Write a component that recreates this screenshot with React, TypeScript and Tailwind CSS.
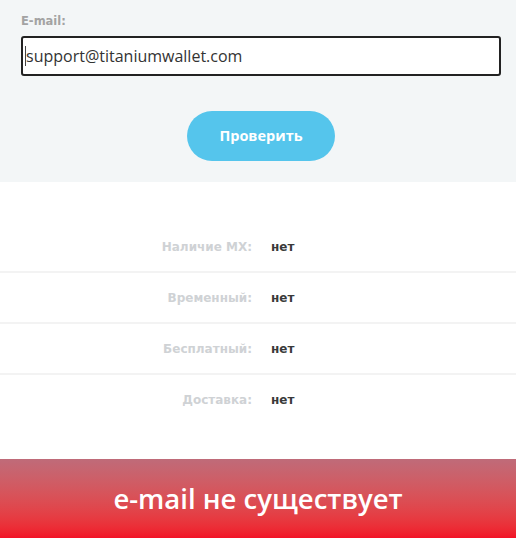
const rows = [
  { label: "Наличие MX:", value: "нет" },
  { label: "Временный:", value: "нет" },
  { label: "Бесплатный:", value: "нет" },
  { label: "Доставка:", value: "нет" },
];

export default function App() {
  return (
    <div className="flex h-[538px] w-full flex-col overflow-hidden bg-white font-['Open_Sans',sans-serif]">
      <section className="flex h-[182px] shrink-0 flex-col bg-[#f3f6f7] pl-[21px] pr-[15px] pt-[13px]">
        <label className="font-['DejaVu_Sans',sans-serif] text-[11.5px] font-bold leading-[16px] text-[#a3a3a3]">
          E-mail:
        </label>
        <div className="mt-[7px] flex h-[40px] items-center rounded-[3px] border-2 border-[#222] bg-white pl-[2px]">
          <span className="h-[20px] w-px bg-[#444]" />
          <span className="text-[16px] text-[#333]">support@titaniumwallet.com</span>
        </div>
        <div className="mt-[35px] flex justify-center">
          <button
            type="button"
            className="h-[50px] w-[148px] rounded-full bg-[#55c5ec] text-[14.5px] font-bold text-white"
          >
            Проверить
          </button>
        </div>
      </section>

      <ul className="mt-[40px] flex flex-col font-['DejaVu_Sans',sans-serif]">
        {rows.map((row, i) => (
          <li
            key={row.label}
            className={
              i < rows.length - 1
                ? "flex h-[51px] items-center border-b-2 border-[#f3f3f3]"
                : "flex h-[49px] items-center"
            }
          >
            <span className="w-[252px] text-right text-[12px] font-bold text-[#cfd2d5]">{row.label}</span>
            <span className="ml-[19px] text-[12px] font-bold text-[#3a3a3a]">{row.value}</span>
          </li>
        ))}
      </ul>

      <div className="mt-auto flex h-[79px] shrink-0 items-center justify-center bg-linear-to-b from-[#bf6b79] to-[#f21126]">
        <span className="text-[27.5px] font-semibold text-white">e-mail не существует</span>
      </div>
    </div>
  );
}
